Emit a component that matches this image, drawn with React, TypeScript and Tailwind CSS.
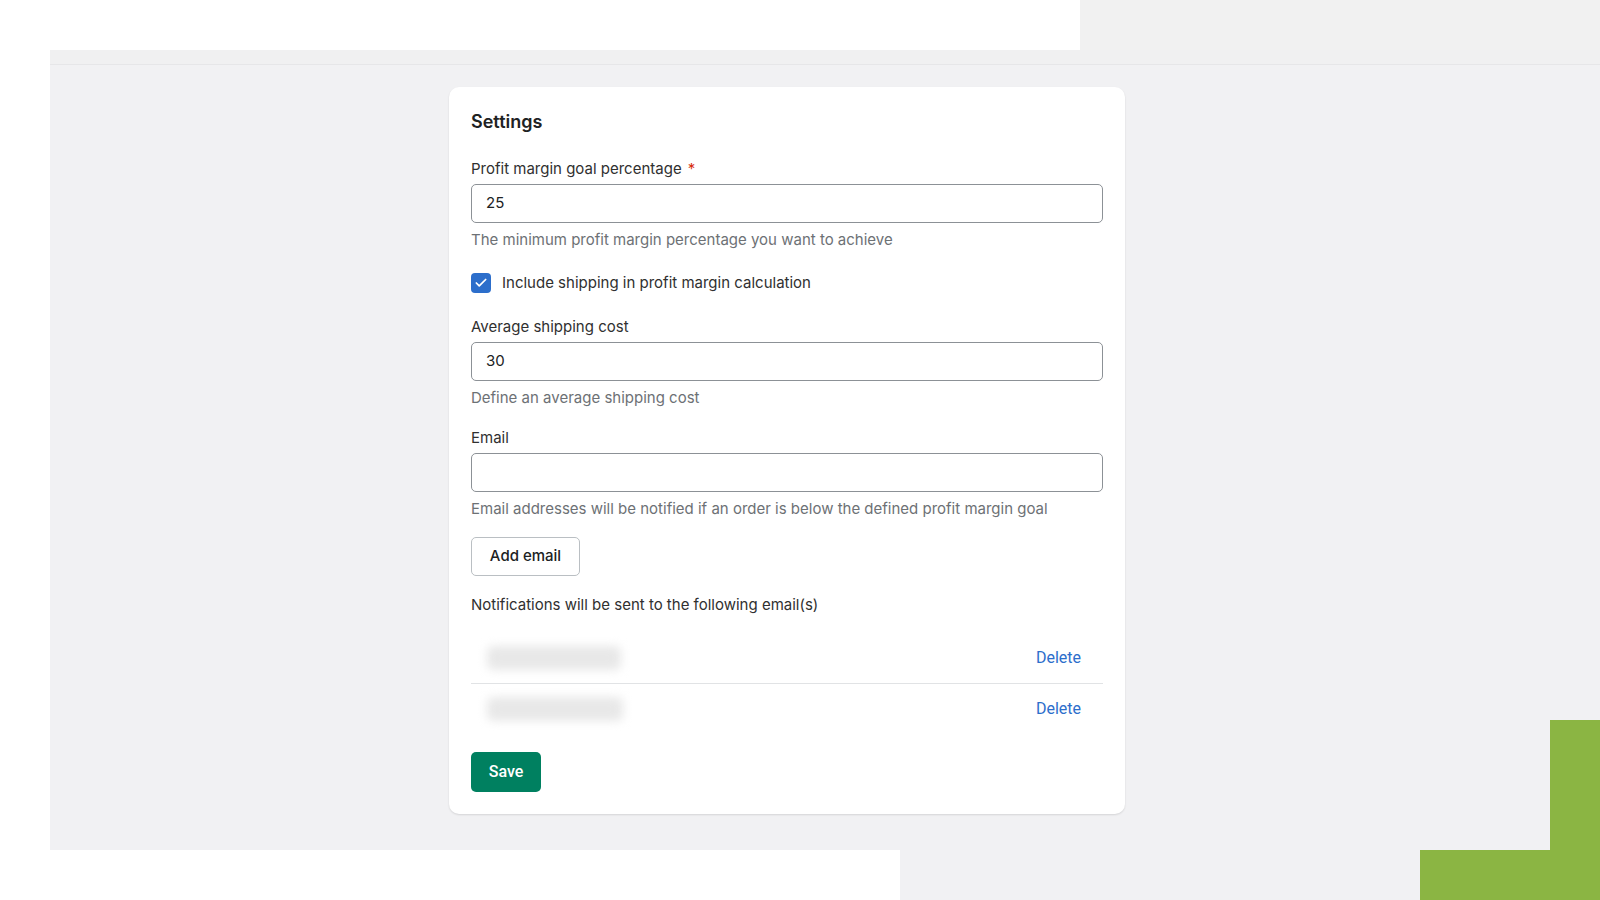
import { Check } from 'lucide-react'

const font = { fontFamily: 'Inter, "Noto Sans", sans-serif' }

function Field({ label, value, help, required }: { label: string; value: string; help: string; required?: boolean }) {
  return (
    <div className="flex flex-col">
      <label className="text-[15px] leading-5 text-[#303030]">
        {label}
        {required && <span className="ml-1.5 text-[#d72c0d]">*</span>}
      </label>
      <div className="mt-[5px] h-[39px] rounded-[5px] border border-[#8c9196] bg-white px-[14px] flex items-center text-[15px] text-[#202223]">
        {value}
      </div>
      <p className="mt-[7px] text-[15px] leading-5 text-[#6d7175]">{help}</p>
    </div>
  )
}

function EmailRow({ blurWidth }: { blurWidth: number }) {
  return (
    <div className="h-[50px] flex items-center justify-between pl-[16px] pr-[22px]">
      <div className="h-[24px] rounded-md bg-[#e8e8e8] blur-[5px]" style={{ width: blurWidth }} />
      <button className="text-[16px] text-[#2c6ecb]" style={{ fontFamily: 'Roboto, sans-serif' }}>Delete</button>
    </div>
  )
}

export default function App() {
  return (
    <div className="flex h-[900px] w-[1600px] bg-[#f1f1f3] overflow-hidden" style={font}>
      {/* left white strip */}
      <div className="w-[50px] bg-white" />

      <div className="flex-1 flex flex-col">
        {/* top */}
        <div className="h-[50px] flex">
          <div className="w-[1030px] bg-white" />
          <div className="flex-1 bg-[#f1f1f1]" />
        </div>
        <div className="h-[15px] bg-[#f0f0f1] border-b border-[#e6e6e8]" />

        {/* content */}
        <div className="flex-1 flex">
          <div className="flex-1 pt-[22px] pl-[399px]">
            <div className="w-[676px] rounded-[10px] bg-white shadow-[0_1px_2px_rgba(0,0,0,0.12)] px-[22px] pt-[23px] pb-[22px] flex flex-col">
              <h2 className="text-[18px] leading-6 font-semibold text-[#202223]">Settings</h2>

              <div className="mt-[25px]">
                <Field label="Profit margin goal percentage" value="25" help="The minimum profit margin percentage you want to achieve" required />
              </div>

              <div className="mt-[23px] flex items-center gap-[11px] h-5">
                <span className="w-5 h-5 rounded-[4px] bg-[#2c6ecb] flex items-center justify-center">
                  <Check className="w-[14px] h-[14px] text-white" strokeWidth={3} />
                </span>
                <span className="text-[15px] text-[#303030]">Include shipping in profit margin calculation</span>
              </div>

              <div className="mt-[24px]">
                <Field label="Average shipping cost" value="30" help="Define an average shipping cost" />
              </div>

              <div className="mt-[20px]">
                <Field label="Email" value="" help="Email addresses will be notified if an order is below the defined profit margin goal" />
              </div>

              <div className="mt-[18px]">
                <button className="h-[39px] w-[109px] rounded-[5px] border border-[#babfc3] bg-white text-[15px] font-medium text-[#202223]">
                  Add email
                </button>
              </div>

              <p className="mt-[19px] text-[15px] leading-5 text-[#303030]">Notifications will be sent to the following email(s)</p>

              <div className="mt-[18px] flex flex-col">
                <EmailRow blurWidth={134} />
                <div className="h-px bg-[#e1e3e5]" />
                <EmailRow blurWidth={136} />
              </div>

              <div className="mt-[18px]">
                <button
                  className="h-[40px] w-[70px] rounded-[5px] bg-[#008060] text-[16px] font-medium text-white"
                  style={{ fontFamily: 'Roboto, sans-serif' }}
                >
                  Save
                </button>
              </div>
            </div>
          </div>
          <div className="w-[50px] flex flex-col justify-end">
            <div className="h-[130px] bg-[#8bb543]" />
          </div>
        </div>

        {/* bottom */}
        <div className="h-[50px] flex">
          <div className="w-[850px] bg-white" />
          <div className="flex-1" />
          <div className="w-[180px] bg-[#8bb543]" />
        </div>
      </div>
    </div>
  )
}
